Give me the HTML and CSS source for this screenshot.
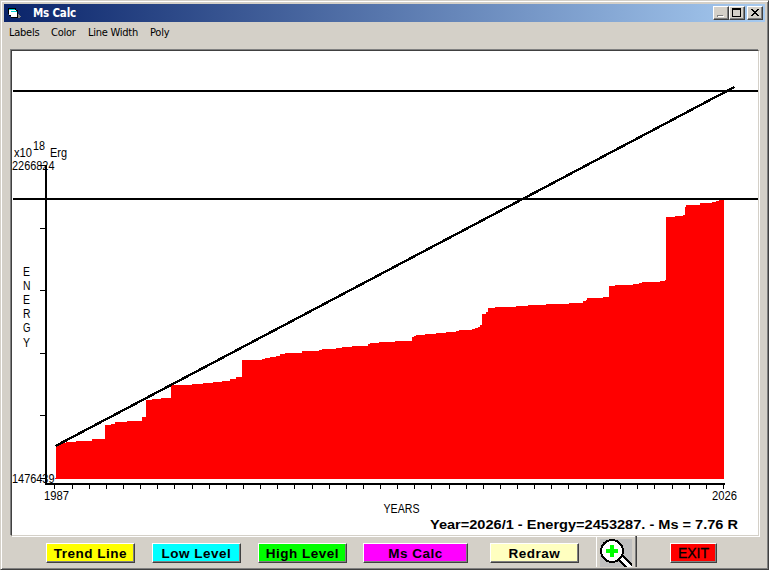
FILE: index.html
```html
<!DOCTYPE html>
<html lang="en">
<head>
  <meta charset="UTF-8">
  <title>Ms Calc</title>
  <link rel="stylesheet" href="styles.css">
</head>
<body>
  <div class="window">
    <!-- Title bar -->
    <div class="titlebar">
      <svg class="app-icon" width="14" height="12" viewBox="0 0 14 12" shape-rendering="crispEdges">
        <path d="M0 0h8v2h2v8H3V8H1V6H0z" fill="#000"/>
        <path d="M1 1h6v1H1z" fill="#00d0d0"/>
        <path d="M1 2h7v2h1v5H3V7H1z" fill="#fff"/>
        <path d="M3 3h6v1H3z" fill="#00d0d0"/>
        <path d="M10 6h1v1h1v1h1v1h-1v1h-2z" fill="#808080"/>
      </svg>
      <span class="title">Ms Calc</span>
      <div class="window-buttons">
        <div class="win-btn">
          <svg width="12" height="10" viewBox="0 0 12 10" shape-rendering="crispEdges">
            <path d="M2 7h6v2H2z" fill="#808080"/><path d="M3 8h6v1H3z" fill="#fff"/>
          </svg>
        </div>
        <div class="win-btn">
          <svg width="12" height="10" viewBox="0 0 12 10" shape-rendering="crispEdges">
            <path d="M1 0h9v9H1zM2 2v6h7V2z" fill="#000" fill-rule="evenodd"/>
          </svg>
        </div>
        <div class="win-btn close">
          <svg width="12" height="10" viewBox="0 0 12 10" shape-rendering="crispEdges">
            <path d="M2 1h2v1h1v1h2V2h1V1h2v1H9v1H8v1H7v1h1v1h1v1h1v1H8V7H7V6H5v1H4v1H2V7h1V6h1V5h1V4H4V3H3V2H2z" fill="#000"/>
          </svg>
        </div>
      </div>
    </div>

    <!-- Menu -->
    <div class="menu">
      <span class="menu-labels">Labels</span>
      <span class="menu-color">Color</span>
      <span class="menu-width">Line Width</span>
      <span class="menu-poly">Poly</span>
    </div>

    <!-- Energy chart -->
    <div class="chart">
      <svg width="746" height="484" viewBox="12 51 746 484">
        <g shape-rendering="crispEdges">
          <path class="area" d="M55 479V478H56V444H62V443H66V442H76V441H92V439H105V425H111V424H115V422H127V421H142V417H146V400H152V399H161V398H171V385H192V384H203V383H213V382H222V381H230V379H236V377H242V360H262V359H265V358H270V357H276V356H280V354H285V353H302V351H319V350H322V349H336V348H342V347H352V346H368V344H370V343H379V342H395V341H412V337H414V336H416V335H425V334H436V333H446V332H456V331H459V330H472V329H475V328H478V327H480V325H482V314H486V312H488V308H495V307H516V306H528V305H546V304H569V303H583V301H586V300H587V298H603V297H609V286H615V285H633V284H639V283H642V282H660V281H665V280H666V217H675V216H683V215H685V207H686V205H700V203H712V202H716V201H719V200H724V479z"/>
          <!-- low and high levels -->
          <path class="line" d="M13 91H758M13 199H758"/>
          <!-- axes -->
          <path class="line" d="M46 165V485M45 484H725"/>
          <path class="tick" d="M40 165.5H46M40 228.5H46M40 290.5H46M40 353.5H46M40 415.5H46M40 478.5H46"/>
          <path class="tick" d="M54.5 485v4M72.5 485v4M89.5 485v4M106.5 485v4M123.5 485v4M140.5 485v4M157.5 485v4M174.5 485v4M192.5 485v4M209.5 485v4M226.5 485v4M243.5 485v4M260.5 485v4M277.5 485v4M294.5 485v4M312.5 485v4M329.5 485v4M346.5 485v4M363.5 485v4M380.5 485v4M397.5 485v4M414.5 485v4M431.5 485v4M449.5 485v4M466.5 485v4M483.5 485v4M500.5 485v4M517.5 485v4M534.5 485v4M551.5 485v4M568.5 485v4M586.5 485v4M603.5 485v4M620.5 485v4M637.5 485v4M654.5 485v4M672.5 485v4M689.5 485v4M706.5 485v4M723.5 485v4"/>
          <!-- trend -->
          <path class="line trend-line" d="M55.5 446L734.5 87"/>
        </g>
        <g class="labels">
          <text x="14" y="157" textLength="18" lengthAdjust="spacingAndGlyphs">x10</text>
          <text x="33" y="150" textLength="12" lengthAdjust="spacingAndGlyphs">18</text>
          <text x="50" y="157" textLength="17" lengthAdjust="spacingAndGlyphs">Erg</text>
          <text x="12" y="170" textLength="42.5" lengthAdjust="spacingAndGlyphs">2266824</text>
          <text x="12" y="483" textLength="42.5" lengthAdjust="spacingAndGlyphs">1476439</text>
          <text x="44" y="500" textLength="25" lengthAdjust="spacingAndGlyphs">1987</text>
          <text x="712" y="500" textLength="25" lengthAdjust="spacingAndGlyphs">2026</text>
          <text x="383.5" y="513" textLength="36" lengthAdjust="spacingAndGlyphs">YEARS</text>
          <text x="23" y="276" textLength="7" lengthAdjust="spacingAndGlyphs">E</text>
          <text x="23" y="290" textLength="7.5" lengthAdjust="spacingAndGlyphs">N</text>
          <text x="23" y="304" textLength="7" lengthAdjust="spacingAndGlyphs">E</text>
          <text x="23" y="318" textLength="7.5" lengthAdjust="spacingAndGlyphs">R</text>
          <text x="23" y="332" textLength="7.5" lengthAdjust="spacingAndGlyphs">G</text>
          <text x="23" y="347" textLength="7" lengthAdjust="spacingAndGlyphs">Y</text>
        </g>
        <text class="status" x="430" y="529" textLength="308" lengthAdjust="spacingAndGlyphs">Year=2026/1 - Energy=2453287. - Ms = 7.76 R</text>
      </svg>
    </div>

    <!-- Buttons -->
    <div class="toolbar">
      <div class="btn trend">Trend Line</div>
      <div class="btn low">Low Level</div>
      <div class="btn high">High Level</div>
      <div class="btn calc">Ms Calc</div>
      <div class="btn redraw">Redraw</div>
      <div class="zoom-btn">
        <svg width="32" height="28" viewBox="0 0 32 28" shape-rendering="crispEdges">
          <path d="M19 17L33 31" stroke="#000" stroke-width="8"/>
          <path d="M18 16L33 31" stroke="#fff" stroke-width="4"/>
          <circle cx="12" cy="12" r="11" fill="#fff" stroke="#000" stroke-width="2"/>
          <path d="M10 6h4v4h4v4h-4v4h-4v-4H6v-4h4z" fill="#0f0"/>
        </svg>
      </div>
      <div class="btn exit">EXIT</div>
    </div>
  </div>
</body>
</html>
```
FILE: styles.css
```css
body {
  margin: 0;
  background: #d4d0c8;
  font-family: "Liberation Sans", Arial, sans-serif;
}
.window {
  box-sizing: border-box;
  width: 769px;
  height: 570px;
  padding: 3px 2px 0 3px;
  background: #d4d0c8;
  border: 1px solid #404040;
  border-top-color: #d4d0c8;
  border-left-color: #d4d0c8;
  box-shadow: inset 1px 1px #fff, inset -1px -1px #808080;
  overflow: hidden;
}
/* Title bar */
.titlebar {
  display: flex;
  align-items: center;
  height: 18px;
  width: 761px;
  background: linear-gradient(to right, #0a246a, #a6caf0);
}
.app-icon {
  margin: 1px 0 0 4px;
}
.title {
  margin-left: 11px;
  color: #fff;
  font: bold 11.5px "DejaVu Sans Condensed", "DejaVu Sans", sans-serif;
  letter-spacing: -0.2px;
}
.window-buttons {
  display: flex;
  margin-left: auto;
  margin-right: 2px;
}
.win-btn {
  box-sizing: border-box;
  width: 16px;
  height: 14px;
  padding: 1px;
  background: #d4d0c8;
  border: 1px solid #404040;
  border-top-color: #fff;
  border-left-color: #fff;
  box-shadow: inset -1px -1px #808080;
}
.win-btn svg {
  display: block;
}
.close {
  margin-left: 2px;
}
/* Menu */
.menu {
  display: flex;
  height: 28px;
  padding-left: 5px;
  line-height: 22px;
  font-family: "DejaVu Sans Condensed", "DejaVu Sans", sans-serif;
  font-size: 11px;
  letter-spacing: -0.25px;
  white-space: nowrap;
}
.menu-labels { width: 42px; }
.menu-color { width: 37px; }
.menu-width { width: 62px; }
/* Chart */
.chart {
  width: 746px;
  height: 484px;
  margin-left: 7px;
  background: #fff;
  border: 1px solid #404040;
  border-right-color: #d4d0c8;
  border-bottom-color: #d4d0c8;
  box-shadow: -1px -1px #808080, 1px 1px #fff;
}
.chart svg {
  display: block;
}
.area {
  fill: #f00;
}
.line {
  stroke: #000;
  stroke-width: 2;
  fill: none;
}
.trend-line {
  stroke-width: 2.4;
}
.tick {
  stroke: #000;
  stroke-width: 1;
}
.labels {
  font-size: 12px;
}
.status {
  font-size: 13.5px;
  font-weight: bold;
}
/* Buttons */
.toolbar {
  display: flex;
  align-items: flex-start;
  height: 32px;
  padding-left: 42px;
}
.btn {
  box-sizing: border-box;
  flex: none;
  width: 89px;
  height: 20px;
  margin-top: 7px;
  border: 1px solid #404040;
  border-top-color: #fff;
  border-left-color: #fff;
  box-shadow: inset -1px -1px #808080;
  text-align: center;
  font-size: 13.5px;
  font-weight: bold;
  line-height: 19px;
  letter-spacing: 0.5px;
  white-space: nowrap;
}
.trend { background: #ff0; }
.low { background: #0ff; margin-left: 17px; }
.high { background: #0f0; margin-left: 17px; }
.calc { background: #f0f; margin-left: 16px; width: 105px; }
.redraw { background: #ffffc0; margin-left: 22px; }
.zoom-btn {
  box-sizing: border-box;
  width: 41px;
  height: 31px;
  margin-left: 17px;
  padding-left: 3px;
  padding-top: 3px;
  border-left: 1px solid #fff;
  border-right: 1px solid #404040;
  box-shadow: inset -1px 0 #808080;
}
.zoom-btn svg {
  display: block;
  background: #c0c0c0;
}
.exit {
  width: 47px;
  margin-left: 33px;
  background: #f00;
  font-weight: normal;
  font-size: 14px;
  letter-spacing: 0;
  -webkit-text-stroke: 0.3px #000;
}
```
